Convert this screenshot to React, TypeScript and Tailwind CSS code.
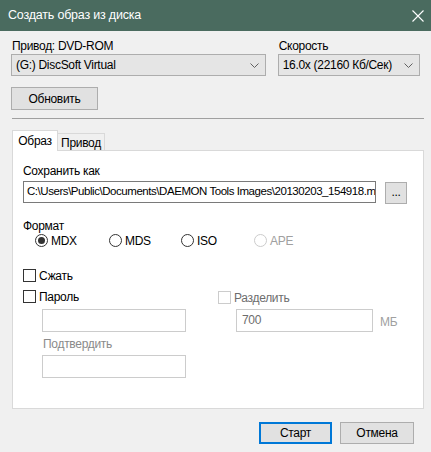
import React from 'react';

const font = { fontFamily: '"Liberation Sans", Arial, sans-serif' };

function Chevron() {
  return (
    <svg width="9" height="5" viewBox="0 0 9 5" className="shrink-0">
      <path d="M0.5 0.5 L4.5 4.5 L8.5 0.5" fill="none" stroke="#606060" strokeWidth="1" />
    </svg>
  );
}

function Radio({ label, checked, disabled }: { label: string; checked?: boolean; disabled?: boolean }) {
  return (
    <div className="flex items-center gap-[3px]">
      <div
        className={`w-[13px] h-[13px] rounded-full border flex items-center justify-center bg-white ${
          disabled ? 'border-[#cccccc]' : 'border-[#333333]'
        }`}
      >
        {checked && <div className="w-[7px] h-[7px] rounded-full bg-[#333333]" />}
      </div>
      <span className={disabled ? 'text-[#a0a0a0]' : 'text-black'}>{label}</span>
    </div>
  );
}

function Check({ label, disabled }: { label: string; disabled?: boolean }) {
  return (
    <div className="h-[15px] flex items-center gap-[3px]">
      <div className={`w-[13px] h-[13px] border bg-white ${disabled ? 'border-[#cccccc]' : 'border-[#333333]'}`} />
      <span className={disabled ? 'text-[#6d6d6d]' : 'text-black'}>{label}</span>
    </div>
  );
}

export default function App() {
  return (
    <div
      className="w-[431px] h-[452px] bg-[#f0f0f0] text-[12px] tracking-[-0.3px] text-black flex flex-col overflow-hidden"
      style={font}
    >
      {/* Title bar */}
      <div className="h-[31px] bg-[#4a6b5f] flex items-center justify-between pl-[8px] pr-[6px] shrink-0">
        <span className="text-white text-[12.5px] tracking-[-0.2px]">Создать образ из диска</span>
        <svg width="12" height="12" viewBox="0 0 12 12" className="mr-[1px]">
          <path d="M0.5 0.5 L11.5 11.5 M11.5 0.5 L0.5 11.5" stroke="#ffffff" strokeWidth="1.1" />
        </svg>
      </div>

      <div className="px-[11px] pt-[8px] flex flex-col">
        {/* Drive / speed */}
        <div className="flex gap-[12px]">
          <div className="flex flex-col w-[256px]">
            <div className="h-[15px] leading-[15px] pl-[1px]">Привод: DVD-ROM</div>
            <div className="h-[22px] bg-[#e5e5e5] border border-[#adadad] flex items-center justify-between pl-[4px] pr-[6px]">
              <span>(G:) DiscSoft Virtual</span>
              <Chevron />
            </div>
          </div>
          <div className="flex flex-col w-[143px]">
            <div className="h-[15px] leading-[15px] pl-[1px]">Скорость</div>
            <div className="h-[22px] bg-[#e5e5e5] border border-[#adadad] flex items-center justify-between pl-[4px] pr-[6px]">
              <span className="whitespace-nowrap">16.0x (22160 Кб/Сек)</span>
              <Chevron />
            </div>
          </div>
        </div>

        <button className="mt-[11px] w-[87px] h-[23px] bg-[#e1e1e1] border border-[#adadad] flex items-center justify-center">
          Обновить
        </button>

        <div className="mt-[8px] ml-[1px] w-[412px] border-t border-[#a0a0a0]" />

        {/* Tabs */}
        <div className="mt-[11px] ml-[1px] flex items-end h-[21px] relative z-10">
          <div className="w-[46px] h-[21px] bg-white border border-b-0 border-[#d9d9d9] flex items-center justify-center pb-[1px]">
            Образ
          </div>
          <div className="w-[47px] h-[18px] bg-[#f0f0f0] border border-l-0 border-[#d9d9d9] flex items-center justify-center pt-[1px]">
            Привод
          </div>
        </div>
        <div className="ml-[1px] w-[412px] h-[259px] -mt-[1px] bg-white border border-[#d9d9d9] flex flex-col pl-[10px] pr-[16px]">
          <div className="mt-[13px] h-[15px] leading-[15px]">Сохранить как</div>
          <div className="mt-[2px] flex items-start">
            <div className="w-[353px] h-[22px] border border-[#7a7a7a] flex items-center pl-[3px] overflow-hidden whitespace-nowrap text-[11.5px] tracking-[-0.45px]">
              C:\Users\Public\Documents\DAEMON Tools Images\20130203_154918.mdx
            </div>
            <div className="ml-[9px] mt-[1px] w-[22px] h-[22px] bg-[#e1e1e1] border border-[#adadad] flex items-center justify-center pb-[3px]">
              ...
            </div>
          </div>

          <div className="mt-[15px] h-[14px] leading-[14px]">Формат</div>
          <div className="h-[15px] flex items-center pl-[12px]">
            <div className="w-[74px]"><Radio label="MDX" checked /></div>
            <div className="w-[72px]"><Radio label="MDS" /></div>
            <div className="w-[73px]"><Radio label="ISO" /></div>
            <Radio label="APE" disabled />
          </div>

          <div className="mt-[20px]"><Check label="Сжать" /></div>

          <div className="mt-[6px] flex">
            <div className="w-[195px] flex flex-col">
              <Check label="Пароль" />
              <div className="ml-[19px] mt-[5px] w-[144px] h-[23px] border border-[#cccccc] bg-white" />
              <div className="ml-[20px] mt-[5px] h-[14px] leading-[14px] text-[#8a8a8a]">Подтвердить</div>
              <div className="ml-[19px] mt-[4px] w-[144px] h-[23px] border border-[#cccccc] bg-white" />
            </div>
            <div className="flex flex-col mt-[1px]">
              <Check label="Разделить" disabled />
              <div className="flex items-center mt-[4px]">
                <div className="ml-[18px] w-[137px] h-[23px] border border-[#cccccc] bg-white flex items-center pl-[5px] pb-[2px] text-[#6d6d6d]">
                  700
                </div>
                <span className="ml-[7px] mt-[2px] text-[#a0a0a0]">МБ</span>
              </div>
            </div>
          </div>
        </div>

        {/* Buttons */}
        <div className="mt-[13px] flex justify-end gap-[8px] pr-[6px]">
          <button className="w-[73px] h-[22px] bg-[#e1e1e1] border-2 border-[#0078d7] flex items-center justify-center">
            Старт
          </button>
          <button className="w-[74px] h-[22px] bg-[#e1e1e1] border border-[#adadad] flex items-center justify-center">
            Отмена
          </button>
        </div>
      </div>
    </div>
  );
}
